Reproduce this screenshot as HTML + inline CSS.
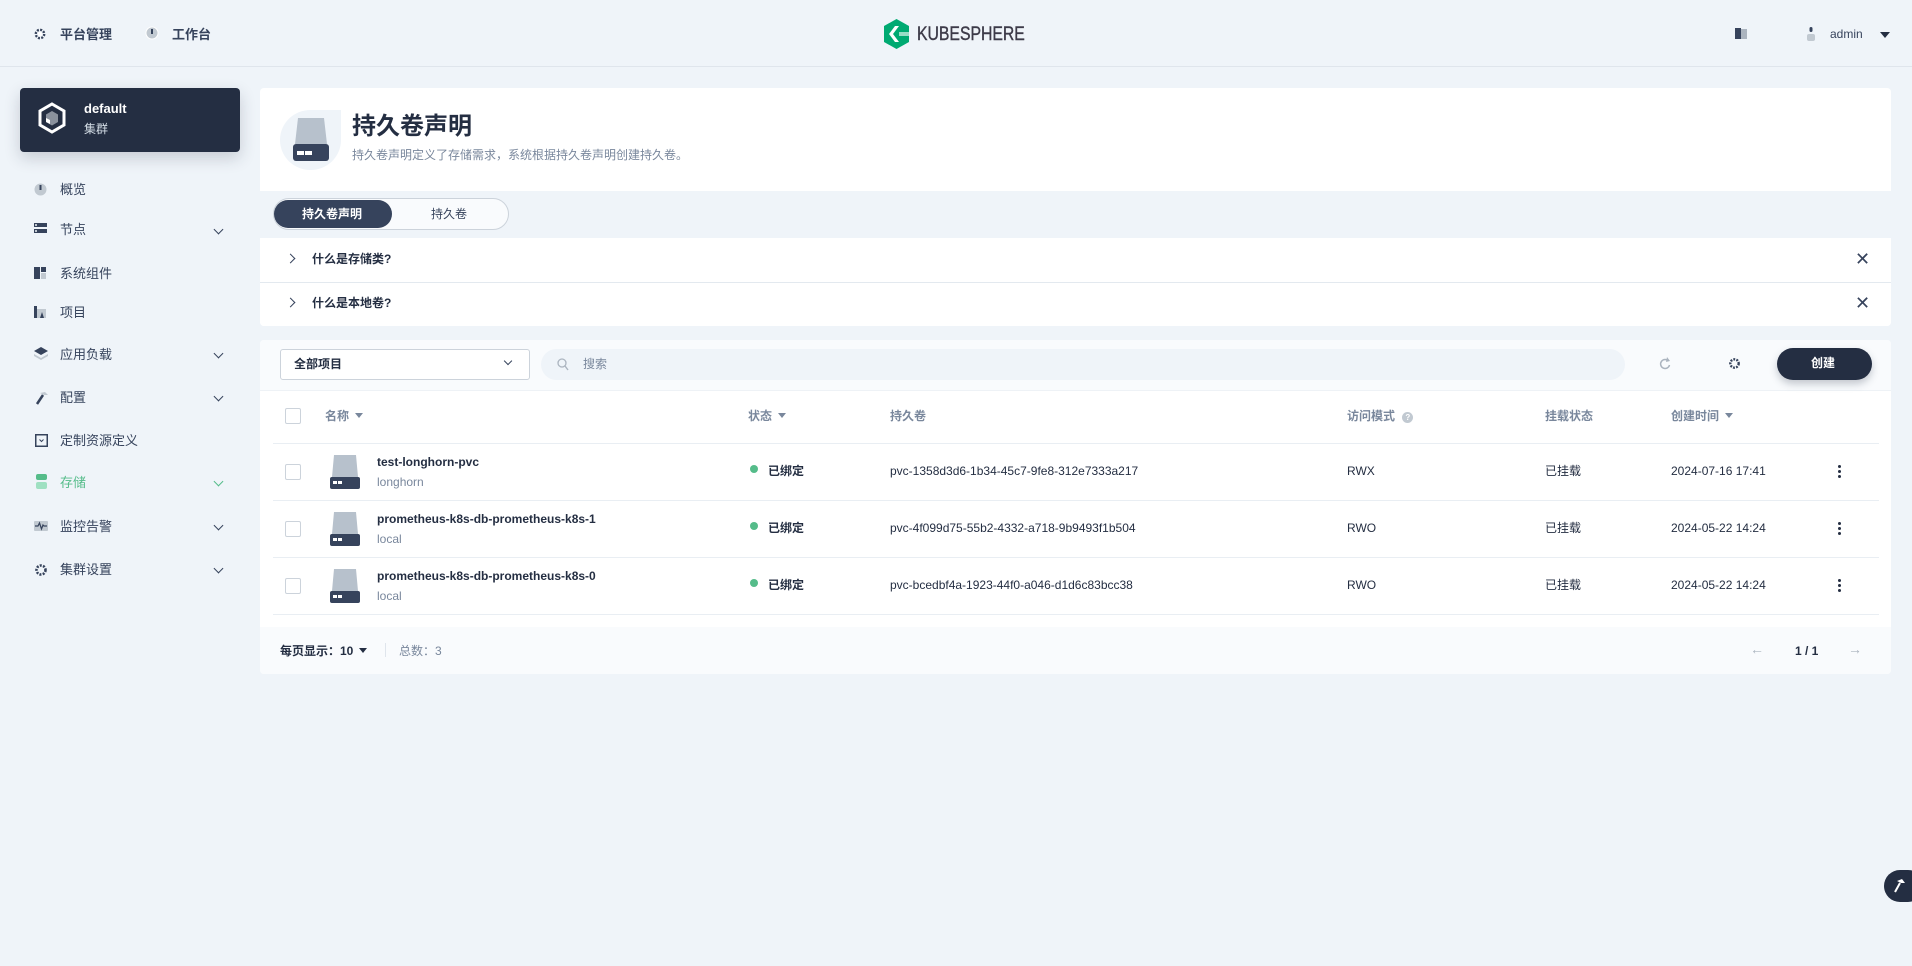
<!DOCTYPE html>
<html><head><meta charset="utf-8"><style>
*{box-sizing:border-box;margin:0;padding:0}
body{width:1912px;height:966px;background:#eff4f9;font-family:"Liberation Sans","Noto Sans CJK SC",sans-serif;color:#242e42;position:relative;overflow:hidden;font-size:12px}
.a{position:absolute}
.t{position:absolute;white-space:nowrap;line-height:1}
.hdrline{left:0;top:66px;width:1912px;height:1px;background:#dfe5ec}
.nav{font-size:13px;color:#36435c}
.chev{position:absolute;width:7px;height:7px;border-right:1.6px solid #36435c;border-bottom:1.6px solid #36435c;transform:rotate(45deg)}
.card{background:#fff;border-radius:4px}
.b{font-weight:bold}
.row{position:absolute;left:273px;width:1606px;height:1px;background:#e9eef3}
.cb{position:absolute;width:16px;height:16px;border:1px solid #ccd3db;border-radius:2px;background:#fff}
.th{font-size:12px;color:#79879c;font-weight:bold}
.caret{display:inline-block;width:0;height:0;border-left:4px solid transparent;border-right:4px solid transparent;border-top:5px solid #79879c;margin-left:6px;vertical-align:2px}
.td{font-size:12px;color:#242e42}
.dots{position:absolute;width:3px}
.dots i{display:block;width:3px;height:3px;background:#242e42;border-radius:50%;margin-bottom:2px}
.xx{position:absolute;font-size:18px;color:#36435c}
</style></head><body>
<div class="a hdrline"></div>
<!-- top nav -->
<svg class="a" style="left:33px;top:27px" width="14" height="14" viewBox="0 0 14 14"><circle cx="7" cy="7" r="4.2" fill="none" stroke="#36435c" stroke-width="2.4" stroke-dasharray="2 1.3"/><circle cx="7" cy="7" r="2" fill="#fff"/></svg>
<div class="t nav b" style="left:60px;top:28px">平台管理</div>
<svg class="a" style="left:145px;top:26px" width="14" height="14"><circle cx="7" cy="7" r="6" fill="#c1c9d1" stroke="#fff"/><rect x="6" y="3" width="2" height="5" fill="#36435c"/></svg>
<div class="t nav b" style="left:172px;top:28px">工作台</div>
<svg class="a" style="left:884px;top:19px" width="25" height="30" viewBox="0 0 25 30"><polygon points="12.5,0 25,7 25,23 12.5,30 0,23 0,7" fill="#00aa72"/><polygon points="15,7 9,15 15,23 11,23 5,15 11,7" fill="#fff"/><rect x="15" y="13" width="10" height="4" fill="#fff" opacity=".6"/></svg>
<div class="t" style="left:917px;top:25px;font-size:19px;color:#3d3b49;transform:scaleX(.83);transform-origin:left;-webkit-text-stroke:0.4px #3d3b49">KUBESPHERE</div>
<svg class="a" style="left:1735px;top:28px" width="12" height="11"><rect x="0" y="0" width="6" height="11" fill="#36435c"/><rect x="6" y="1" width="6" height="10" fill="#abb4bf"/></svg>
<svg class="a" style="left:1806px;top:27px" width="10" height="14"><rect x="3.5" y="0" width="3" height="5" rx="1.5" fill="#36435c"/><rect x="1" y="7" width="8" height="7" rx="2" fill="#c1c9d1"/></svg>
<div class="t" style="left:1830px;top:28px;font-size:12px;color:#36435c">admin</div>
<div class="a" style="left:1880px;top:32px;border-left:5px solid transparent;border-right:5px solid transparent;border-top:6px solid #242e42"></div>

<!-- sidebar card -->
<div class="a" style="left:20px;top:88px;width:220px;height:64px;background:#242e42;border-radius:4px;box-shadow:0 6px 16px rgba(36,46,66,.2)"></div>
<svg class="a" style="left:36px;top:102px" width="32" height="32" viewBox="0 0 32 32"><polygon points="16,2 28,9 28,23 16,30 4,23 4,9" fill="none" stroke="#fff" stroke-width="3"/><polygon points="16,9 22,12.5 22,20 16,23.5 10,20 10,12.5" fill="#8a919d"/><polygon points="10,16 14,18 14,22 10,20" fill="#fff"/></svg>
<div class="t b" style="left:84px;top:102px;font-size:13px;color:#fff">default</div>
<div class="t" style="left:84px;top:123px;font-size:12px;color:#d5dee7">集群</div>

<!-- sidebar menu -->
<svg class="a" style="left:34px;top:183px" width="13" height="13"><circle cx="6.5" cy="6.5" r="6" fill="#c1c9d1"/><rect x="5.5" y="2" width="2" height="5" fill="#36435c"/></svg>
<div class="t nav" style="left:60px;top:183px">概览</div>
<svg class="a" style="left:34px;top:223px" width="13" height="11"><rect width="13" height="4" fill="#36435c"/><rect y="6" width="13" height="4" fill="#36435c"/><rect x="1" y="1" width="2" height="2" fill="#c1c9d1"/><rect x="1" y="7" width="2" height="2" fill="#c1c9d1"/></svg>
<div class="t nav" style="left:60px;top:223px">节点</div><div class="chev" style="left:215px;top:226px"></div>
<svg class="a" style="left:34px;top:267px" width="12" height="12"><rect width="6" height="12" fill="#36435c"/><rect x="7" width="5" height="5" fill="#36435c"/><rect x="7" y="6" width="5" height="6" fill="#c1c9d1"/></svg>
<div class="t nav" style="left:60px;top:267px">系统组件</div>
<svg class="a" style="left:34px;top:306px" width="12" height="12"><rect width="3" height="12" fill="#36435c"/><rect x="3" y="3" width="9" height="9" fill="#c1c9d1"/><polygon points="6,12 8,6 10,12" fill="#36435c"/></svg>
<div class="t nav" style="left:60px;top:306px">项目</div>
<svg class="a" style="left:34px;top:347px" width="14" height="13"><polygon points="7,0 14,4 7,8 0,4" fill="#36435c"/><polygon points="0,7 7,11 14,7 14,9 7,13 0,9" fill="#c1c9d1"/></svg>
<div class="t nav" style="left:60px;top:348px">应用负载</div><div class="chev" style="left:215px;top:350px"></div>
<svg class="a" style="left:35px;top:391px" width="13" height="14"><path d="M2 13 L8 4" stroke="#36435c" stroke-width="2.5"/><path d="M5 2 L10 1 L13 4 L9 4Z" fill="#c1c9d1"/></svg>
<div class="t nav" style="left:60px;top:391px">配置</div><div class="chev" style="left:215px;top:393px"></div>
<svg class="a" style="left:35px;top:434px" width="13" height="13"><rect x=".75" y=".75" width="11.5" height="11.5" fill="#eff4f9" stroke="#36435c" stroke-width="1.5"/><path d="M4.5 5.5 L6.5 7.5 L8.5 5.5" stroke="#36435c" fill="none"/></svg>
<div class="t nav" style="left:60px;top:434px">定制资源定义</div>
<svg class="a" style="left:36px;top:474px" width="11" height="15"><rect width="11" height="6" rx="2" fill="#55bc8a"/><rect y="8" width="11" height="7" rx="2" fill="#9fe0c2"/></svg>
<div class="t nav" style="left:60px;top:476px;color:#55bc8a">存储</div><div class="chev" style="left:215px;top:478px;border-color:#55bc8a"></div>
<svg class="a" style="left:34px;top:521px" width="14" height="10"><rect width="14" height="10" rx="1" fill="#c1c9d1"/><path d="M1 5 H4 L5.5 2 L7.5 8 L9 4 L10 5 H13" stroke="#36435c" fill="none" stroke-width="1.2"/></svg>
<div class="t nav" style="left:60px;top:520px">监控告警</div><div class="chev" style="left:215px;top:522px"></div>
<svg class="a" style="left:34px;top:563px" width="14" height="14" viewBox="0 0 14 14"><circle cx="7" cy="7" r="4.5" fill="none" stroke="#36435c" stroke-width="2.6" stroke-dasharray="2 1.3"/><circle cx="7" cy="7" r="2" fill="#eff4f9"/></svg>
<div class="t nav" style="left:60px;top:563px">集群设置</div><div class="chev" style="left:215px;top:565px"></div>

<!-- header card -->
<div class="a card" style="left:260px;top:88px;width:1631px;height:238px;overflow:hidden">
  <div class="a" style="left:0;top:103px;width:1631px;height:47px;background:#eff4f9"></div>
  <div class="a" style="left:0;top:150px;width:1631px;height:44px;background:#fff"></div>
  <div class="a" style="left:0;top:194px;width:1631px;height:1px;background:#e3e9ef"></div>
  <div class="a" style="left:0;top:195px;width:1631px;height:43px;background:#fff"></div>
</div>
<div class="a" style="left:280px;top:110px;width:61px;height:60px;background:#eff4f9;border-radius:50% 0 50% 50%"></div>
<svg class="a" style="left:293px;top:118px" width="36" height="43" viewBox="0 0 36 43"><polygon points="5,0 31,0 34,26 2,26" fill="#b7c1cc"/><rect x="0" y="26" width="36" height="17" rx="3" fill="#36435c"/><rect x="4" y="33" width="7" height="4" fill="#fff"/><rect x="12" y="33" width="7" height="4" fill="#fff"/></svg>
<div class="t b" style="left:352px;top:115px;font-size:24px;color:#242e42">持久卷声明</div>
<div class="t" style="left:352px;top:149px;font-size:12px;color:#79879c">持久卷声明定义了存储需求，系统根据持久卷声明创建持久卷。</div>
<div class="a" style="left:273px;top:198px;width:236px;height:32px;border:1px solid #ccd3db;border-radius:16px;background:#f9fbfd"></div>
<div class="a" style="left:274px;top:200px;width:118px;height:28px;border-radius:14px;background:#36435c"></div>
<div class="t b" style="left:302px;top:208px;font-size:12px;color:#fff">持久卷声明</div>
<div class="t" style="left:431px;top:208px;font-size:12px;color:#36435c">持久卷</div>
<div class="chev" style="left:287px;top:255px;transform:rotate(-45deg)"></div>
<div class="t b" style="left:312px;top:253px;font-size:12px">什么是存储类?</div>
<div class="xx" style="left:1855px;top:249px">✕</div>
<div class="chev" style="left:287px;top:299px;transform:rotate(-45deg)"></div>
<div class="t b" style="left:312px;top:297px;font-size:12px">什么是本地卷?</div>
<div class="xx" style="left:1855px;top:293px">✕</div>

<!-- table card -->
<div class="a card" style="left:260px;top:340px;width:1631px;height:334px;overflow:hidden">
  <div class="a" style="left:0;top:0;width:1631px;height:50px;background:#f9fbfd"></div>
  <div class="a" style="left:0;top:50px;width:1631px;height:1px;background:#eef2f6"></div>
  <div class="a" style="left:0;top:287px;width:1631px;height:47px;background:#f9fbfd"></div>
</div>
<div class="a" style="left:280px;top:349px;width:250px;height:31px;border:1px solid #ccd3db;border-radius:3px;background:#fff"></div>
<div class="t b" style="left:294px;top:358px;font-size:12px">全部项目</div>
<div class="chev" style="left:505px;top:358px;width:6px;height:6px;border-width:1.3px"></div>
<div class="a" style="left:541px;top:349px;width:1084px;height:31px;border-radius:16px;background:#eff4f9"></div>
<svg class="a" style="left:557px;top:358px" width="12" height="13"><circle cx="5" cy="5" r="4" fill="none" stroke="#abb4bf" stroke-width="1.3"/><path d="M8 8 L11 12" stroke="#abb4bf" stroke-width="1.4"/></svg>
<div class="t" style="left:583px;top:358px;font-size:12px;color:#79879c">搜索</div>
<svg class="a" style="left:1659px;top:357px" width="12" height="13"><path d="M9.5 4 A4.5 4.5 0 1 0 10.5 8" fill="none" stroke="#abb4bf" stroke-width="1.5"/><polygon points="8,0 11,4 7,5" fill="#abb4bf"/></svg>
<svg class="a" style="left:1728px;top:357px" width="13" height="13" viewBox="0 0 14 14"><circle cx="7" cy="7" r="4.5" fill="none" stroke="#36435c" stroke-width="2.6" stroke-dasharray="2 1.3"/><circle cx="7" cy="7" r="2" fill="#f9fbfd"/></svg>
<div class="a" style="left:1777px;top:348px;width:95px;height:32px;border-radius:16px;background:#242e42;box-shadow:0 4px 8px rgba(36,46,66,.25)"></div>
<div class="t b" style="left:1811px;top:357px;font-size:12px;color:#fff">创建</div>

<div class="cb" style="left:285px;top:408px"></div>
<div class="t th" style="left:325px;top:410px">名称<span class="caret"></span></div>
<div class="t th" style="left:748px;top:410px">状态<span class="caret"></span></div>
<div class="t th" style="left:890px;top:410px">持久卷</div>
<div class="t th" style="left:1347px;top:410px">访问模式 <span style="display:inline-block;width:11px;height:11px;border-radius:50%;background:#c1c9d1;color:#fff;font-size:8px;text-align:center;line-height:11px;margin-left:4px">?</span></div>
<div class="t th" style="left:1545px;top:410px">挂载状态</div>
<div class="t th" style="left:1671px;top:410px">创建时间<span class="caret"></span></div>
<div class="row" style="top:443px"></div>
<div class="row" style="top:500px"></div>
<div class="row" style="top:557px"></div>
<div class="row" style="top:614px"></div>

<!-- rows -->
<div class="cb" style="left:285px;top:464px"></div>
<svg class="a" style="left:330px;top:455px" width="30" height="34" viewBox="0 0 30 34"><polygon points="4,0 26,0 28,22 2,22" fill="#b7c1cc"/><rect y="22" width="30" height="12" rx="2" fill="#36435c"/><rect x="3" y="26" width="4" height="3" fill="#fff"/><rect x="8" y="26" width="4" height="3" fill="#fff"/></svg>
<div class="t b" style="left:377px;top:456px;font-size:12px">test-longhorn-pvc</div>
<div class="t" style="left:377px;top:476px;font-size:12px;color:#79879c">longhorn</div>
<div class="a" style="left:750px;top:465px;width:8px;height:8px;border-radius:50%;background:#55bc8a"></div>
<div class="t b" style="left:768px;top:465px;font-size:12px">已绑定</div>
<div class="t td" style="left:890px;top:465px">pvc-1358d3d6-1b34-45c7-9fe8-312e7333a217</div>
<div class="t td" style="left:1347px;top:465px">RWX</div>
<div class="t td" style="left:1545px;top:465px">已挂载</div>
<div class="t td" style="left:1671px;top:465px">2024-07-16 17:41</div>
<div class="dots" style="left:1838px;top:465px"><i></i><i></i><i></i></div>

<div class="cb" style="left:285px;top:521px"></div>
<svg class="a" style="left:330px;top:512px" width="30" height="34" viewBox="0 0 30 34"><polygon points="4,0 26,0 28,22 2,22" fill="#b7c1cc"/><rect y="22" width="30" height="12" rx="2" fill="#36435c"/><rect x="3" y="26" width="4" height="3" fill="#fff"/><rect x="8" y="26" width="4" height="3" fill="#fff"/></svg>
<div class="t b" style="left:377px;top:513px;font-size:12px">prometheus-k8s-db-prometheus-k8s-1</div>
<div class="t" style="left:377px;top:533px;font-size:12px;color:#79879c">local</div>
<div class="a" style="left:750px;top:522px;width:8px;height:8px;border-radius:50%;background:#55bc8a"></div>
<div class="t b" style="left:768px;top:522px;font-size:12px">已绑定</div>
<div class="t td" style="left:890px;top:522px">pvc-4f099d75-55b2-4332-a718-9b9493f1b504</div>
<div class="t td" style="left:1347px;top:522px">RWO</div>
<div class="t td" style="left:1545px;top:522px">已挂载</div>
<div class="t td" style="left:1671px;top:522px">2024-05-22 14:24</div>
<div class="dots" style="left:1838px;top:522px"><i></i><i></i><i></i></div>

<div class="cb" style="left:285px;top:578px"></div>
<svg class="a" style="left:330px;top:569px" width="30" height="34" viewBox="0 0 30 34"><polygon points="4,0 26,0 28,22 2,22" fill="#b7c1cc"/><rect y="22" width="30" height="12" rx="2" fill="#36435c"/><rect x="3" y="26" width="4" height="3" fill="#fff"/><rect x="8" y="26" width="4" height="3" fill="#fff"/></svg>
<div class="t b" style="left:377px;top:570px;font-size:12px">prometheus-k8s-db-prometheus-k8s-0</div>
<div class="t" style="left:377px;top:590px;font-size:12px;color:#79879c">local</div>
<div class="a" style="left:750px;top:579px;width:8px;height:8px;border-radius:50%;background:#55bc8a"></div>
<div class="t b" style="left:768px;top:579px;font-size:12px">已绑定</div>
<div class="t td" style="left:890px;top:579px">pvc-bcedbf4a-1923-44f0-a046-d1d6c83bcc38</div>
<div class="t td" style="left:1347px;top:579px">RWO</div>
<div class="t td" style="left:1545px;top:579px">已挂载</div>
<div class="t td" style="left:1671px;top:579px">2024-05-22 14:24</div>
<div class="dots" style="left:1838px;top:579px"><i></i><i></i><i></i></div>

<!-- footer -->
<div class="t b" style="left:280px;top:645px;font-size:12px">每页显示：10<span class="caret" style="border-top-color:#242e42"></span></div>
<div class="a" style="left:385px;top:643px;width:1px;height:14px;background:#dfe5ec"></div>
<div class="t" style="left:399px;top:645px;font-size:12px;color:#79879c">总数：3</div>
<div class="t" style="left:1750px;top:642px;font-size:14px;color:#abb4bf">←</div>
<div class="t b" style="left:1795px;top:645px;font-size:12px">1 / 1</div>
<div class="t" style="left:1848px;top:642px;font-size:14px;color:#abb4bf">→</div>

<!-- floating tool -->
<div class="a" style="left:1884px;top:870px;width:40px;height:32px;border-radius:16px;background:#242e42"></div>
<svg class="a" style="left:1892px;top:878px" width="14" height="16"><path d="M3 14 L8 5" stroke="#fff" stroke-width="2"/><path d="M5 3 L10 1 L13 5 L9 5Z" fill="#fff"/></svg>
</body></html>
